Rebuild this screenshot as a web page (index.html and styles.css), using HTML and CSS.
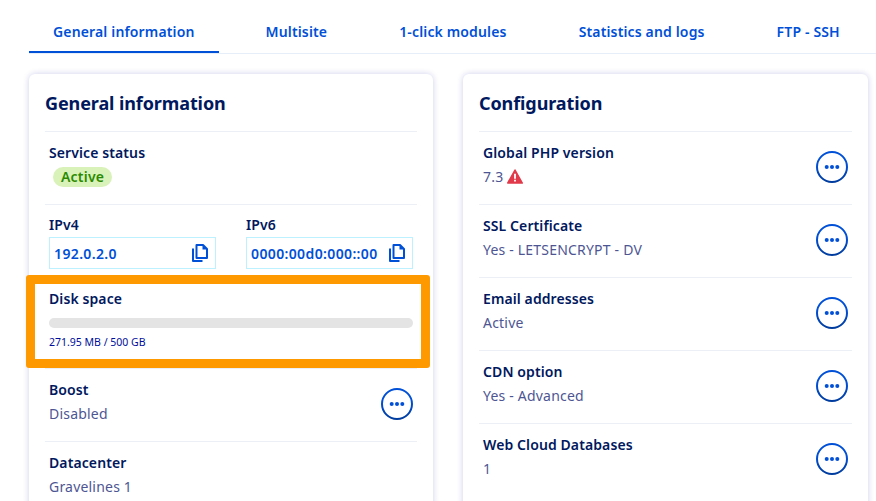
FILE: index.html
```html
<!DOCTYPE html>
<html lang="en">
<head>
    <meta charset="UTF-8">
    <meta name="viewport" content="width=device-width, initial-scale=1.0">
    <title>General information</title>
    <link rel="stylesheet" href="styles.css">
</head>
<body>
    <svg class="defs" width="0" height="0">
        <linearGradient id="ring" x1="0" y1="0" x2="0" y2="1">
            <stop offset="0.4" stop-color="#0050d7"/>
            <stop offset="1" stop-color="#003c9e"/>
        </linearGradient>
        <symbol id="more" viewBox="0 0 32 32">
            <circle cx="16" cy="16" r="15" fill="#fff" stroke="url(#ring)" stroke-width="2"/>
            <circle cx="10.700" cy="16" r="2" fill="#0050d7"/>
            <circle cx="16" cy="16" r="2" fill="#0050d7"/>
            <circle cx="21.300" cy="16" r="2" fill="#0050d7"/>
        </symbol>
        <symbol id="copy" viewBox="0 0 16 18">
            <path d="M4.500 1h6.500l4 4v9h-10.500z" fill="none" stroke="#0050d7" stroke-width="2" stroke-linejoin="round"/>
            <path d="M1 4.500v12.500h9.500" fill="none" stroke="#0050d7" stroke-width="2" stroke-linejoin="round"/>
            <path d="M10.500 1v4.500h4.500" fill="#0050d7"/>
        </symbol>
    </svg>

    <nav class="tabs">
        <a class="tab active" href="#">General information</a>
        <a class="tab" href="#">Multisite</a>
        <a class="tab" href="#">1-click modules</a>
        <a class="tab" href="#">Statistics and logs</a>
        <a class="tab" href="#">FTP - SSH</a>
    </nav>

    <main class="columns">
        <section class="card">
            <h2>General information</h2>
            <div class="row">
                <div class="info">
                    <div class="label">Service status</div>
                    <span class="badge">Active</span>
                </div>
            </div>
            <div class="row ip-row">
                <div>
                    <div class="label">IPv4</div>
                    <div class="copy-field">
                        <span>192.0.2.0</span>
                        <svg class="copy-icon"><use href="#copy"/></svg>
                    </div>
                </div>
                <div>
                    <div class="label">IPv6</div>
                    <div class="copy-field">
                        <span>0000:00d0:000::00</span>
                        <svg class="copy-icon"><use href="#copy"/></svg>
                    </div>
                </div>
            </div>
            <div class="row disk-row">
                <div class="label">Disk space</div>
                <div class="bar"></div>
                <div class="bar-text">271.95 MB / 500 GB</div>
                <div class="highlight"></div>
            </div>
            <div class="row">
                <div class="info">
                    <div class="label">Boost</div>
                    <div class="value">Disabled</div>
                </div>
                <svg class="more"><use href="#more"/></svg>
            </div>
            <div class="row">
                <div class="info">
                    <div class="label">Datacenter</div>
                    <div class="value">Gravelines 1</div>
                </div>
            </div>
        </section>

        <section class="card">
            <h2>Configuration</h2>
            <div class="row">
                <div class="info">
                    <div class="label">Global PHP version</div>
                    <div class="value">7.3
                        <svg class="warn" viewBox="0 0 16 15"><path d="M8 1l7.300 13h-14.600z" fill="#e13a4a" stroke="#e13a4a" stroke-width="1.500" stroke-linejoin="round"/><path d="M7.100 4.800h1.800v5h-1.800zM7.100 10.800h1.800v1.800h-1.800z" fill="#fff"/></svg>
                    </div>
                </div>
                <svg class="more"><use href="#more"/></svg>
            </div>
            <div class="row">
                <div class="info">
                    <div class="label">SSL Certificate</div>
                    <div class="value">Yes - LETSENCRYPT - DV</div>
                </div>
                <svg class="more"><use href="#more"/></svg>
            </div>
            <div class="row">
                <div class="info">
                    <div class="label">Email addresses</div>
                    <div class="value">Active</div>
                </div>
                <svg class="more"><use href="#more"/></svg>
            </div>
            <div class="row">
                <div class="info">
                    <div class="label">CDN option</div>
                    <div class="value">Yes - Advanced</div>
                </div>
                <svg class="more"><use href="#more"/></svg>
            </div>
            <div class="row">
                <div class="info">
                    <div class="label">Web Cloud Databases</div>
                    <div class="value">1</div>
                </div>
                <svg class="more"><use href="#more"/></svg>
            </div>
        </section>
    </main>
</body>
</html>
```

FILE: styles.css
```css
html, body {
    height: 501px;
    overflow: hidden;
}
body {
    margin: 0;
    background: #fff;
    color: #00185e;
    font-family: "Noto Sans", Arial, sans-serif;
    font-size: 15px;
}
.defs {
    position: absolute;
}
.tabs {
    display: flex;
    height: 53px;
    margin-left: 29px;
    border-bottom: 1px solid #e6eefa;
}
.tab {
    display: block;
    height: 51px;
    line-height: 63px;
    padding: 0 24px;
    margin-right: 24px;
    color: #0050d7;
    font-size: 14px;
    font-weight: 600;
    letter-spacing: 0.15px;
    text-decoration: none;
    white-space: nowrap;
}
.tab.active {
    height: 51px;
    margin-right: 23px;
    border-bottom: 2px solid #0050d7;
}
.columns {
    display: grid;
    grid-template-columns: 404px 405px;
    gap: 30px;
    margin: 20px 0 0 29px;
}
.card {
    padding: 0 16px;
    border-radius: 6px;
    background: #fff;
    box-shadow: 0 0 6px rgba(0, 14, 156, 0.2);
}
h2 {
    height: 57px;
    margin: 0;
    font-size: 18px;
    font-weight: 700;
    letter-spacing: -0.1px;
    line-height: 59px;
}
.row {
    position: relative;
    display: flex;
    justify-content: space-between;
    align-items: center;
    box-sizing: border-box;
    height: 73px;
    padding: 0 4px 2px;
    border-top: 1px solid #eceff5;
}
.info {
    margin-bottom: 4px;
}
.label {
    font-size: 14px;
    font-weight: 600;
    letter-spacing: 0.1px;
    line-height: 20px;
}
.value {
    margin-top: 4px;
    color: #4d5693;
    font-size: 14px;
    letter-spacing: 0.2px;
    line-height: 20px;
}
.badge {
    display: inline-block;
    margin: 4px 0 0 4px;
    padding: 0 8px;
    border-radius: 10px;
    background: #d9f2b9;
    color: #2a8a00;
    font-size: 14px;
    font-weight: 600;
    letter-spacing: 0.2px;
    line-height: 20px;
}
.ip-row {
    display: grid;
    grid-template-columns: 167px 167px;
    gap: 30px;
    align-items: start;
    padding-top: 10px;
}
.copy-field {
    display: flex;
    justify-content: space-between;
    align-items: center;
    box-sizing: border-box;
    height: 32px;
    margin-top: 2px;
    padding: 0 7px 0 4px;
    border: 1px solid #bef1ff;
    color: #0050d7;
    font-size: 14px;
    font-weight: 600;
    letter-spacing: 0.37px;
}
.copy-icon {
    width: 16px;
    height: 18px;
    flex: none;
}
.disk-row {
    display: block;
    height: 91px;
    padding-top: 11px;
}
.bar {
    height: 10px;
    margin-top: 9px;
    border-radius: 5px;
    background: #e4e4e4;
}
.bar-text {
    margin-top: 7px;
    color: #000e9c;
    font-size: 10.5px;
    line-height: 14px;
}
.highlight {
    position: absolute;
    top: -3px;
    left: -19px;
    width: 386px;
    height: 75px;
    border: 9px solid #ff9900;
    border-radius: 3px;
}
.more {
    width: 32px;
    height: 32px;
    flex: none;
}
.warn {
    width: 16px;
    height: 15px;
    vertical-align: -2px;
}
```
